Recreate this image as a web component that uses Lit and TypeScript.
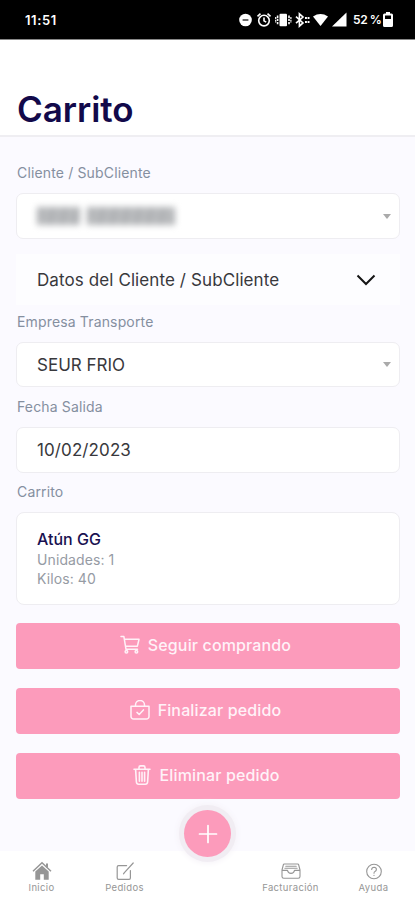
import { LitElement, html, css, svg } from "lit";
import { customElement } from "lit/decorators.js";

const stroke = (size: number, body: unknown, width = 1.2) => html`<svg
  width=${size} height=${size} viewBox="0 0 20 20" fill="none" stroke="currentColor"
  stroke-width=${width} stroke-linecap="round" stroke-linejoin="round">${body}</svg>`;

const cart = stroke(20, svg`<path d="M1 1.600h2.900L6 14.300h11.500M4.500 4.300H19l-1.600 6.900H5.500"/><circle cx="6.400" cy="16.800" r="1.300"/><circle cx="16.400" cy="16.800" r="1.300"/>`, 1.5);
const bag = stroke(20, svg`<path d="M1 6.200h18v10.200a2.600 2.600 0 0 1-2.600 2.600H3.600A2.600 2.600 0 0 1 1 16.400zM5.500 6V5a4.500 4.500 0 0 1 9 0v1M7 12.400l2.200 2.100 4.200-4.600"/>`, 1.5);
const trash = stroke(20, svg`<path d="M2 4.200h16M7 4V2.400Q7 .9 8.500 .9h3Q13 .9 13 2.400V4M3.600 4.400l.8 12.600q.2 2.200 2.200 2.200h6.800q2 0 2.200-2.200l.8-12.600M7.400 7.200v9M10 7.200v9M12.600 7.200v9"/>`, 1.6);

const home = html`<svg width="20" height="20" viewBox="0 0 20 20" fill="none" stroke="currentColor">
  <path d="M1 10.200 10 1.800l9 8.400" stroke-width="1.500"/><path d="M15 2.500v4" stroke-width="2"/>
  <path d="M10 4.400 3.300 10.500v8.300h4.900v-5.500h3.600v5.500h4.900v-8.300z" fill="currentColor" stroke="none"/></svg>`;
const edit = stroke(20, svg`<path d="M11.600 4.600H3.600q-1.400 0-1.400 1.400v11q0 1.300 1.400 1.300h10.500q1.300 0 1.300-1.300V9.500M18.200 2 9.400 11.600l-.9 1.200"/>`);
const tray = stroke(20, svg`<path d="M3.400 3h13.200q1 0 1.100 1L19 9v6.600q0 1.700-1.700 1.700H2.700Q1 17.300 1 15.600V9l1.300-5q.1-1 1.100-1zM1.200 9.400h5.300q.6 3 3.500 3t3.500-3h5.300M4.800 5.200h10.400M3.900 7.300h12.200"/>`, 1.1);
const help = stroke(20, svg`<circle cx="10" cy="10.500" r="7.300"/><path d="M7.700 8.500q.1-2.200 2.400-2.200 2.300.1 2.300 2.100 0 1.300-1.400 2-1 .6-1 1.800M10 14.400v.1"/>`, 1.1);

const statusIcons = html`<svg class="icons" width="110" height="16" viewBox="0 0 110 16" fill="#fff">
  <circle cx="6.500" cy="8" r="6.300"/><path d="M3.600 7.200h5.800v1.600H3.600z" fill="#444"/>
  <g fill="none" stroke="#fff" stroke-width="1.600"><circle cx="25" cy="8.600" r="5.300"/>
    <path d="M25 5.500v3.300l2.200 1.400M18.500 4.300l3-2.700M31.500 4.300l-3-2.700"/></g>
  <rect x="40.500" y="1.800" width="7.500" height="12.400" rx="1"/>
  <path d="M38.600 3.500v9M50 3.500v9" stroke="#fff" stroke-width="1.600" stroke-dasharray="2.400 .8"/><path d="M36.700 5v6M51.900 5v6" stroke="#fff" stroke-width="1.200" stroke-dasharray="2 .8"/>
  <path d="m57 4.600 7 6.300-3.600 3.300V1.800L64 5l-7 6.200" fill="none" stroke="#fff" stroke-width="1.600"/>
  <path d="M66 6h4.500M66 10h4.500" stroke="#fff" stroke-width="1.900" stroke-dasharray="1.900 .7"/>
  <path d="M74 4.400q7.500-4.800 15 0L81.500 14z"/><path d="M93 14.600h14.500V.6z"/></svg>`;

@customElement("app-root")
export class AppRoot extends LitElement {
  static styles = css`
    :host {
      display: flex; flex-direction: column; width: 415px; height: 900px;
      background: #fbfaff; font-family: Inter, "Liberation Sans", sans-serif; overflow: hidden;
    }
    * { box-sizing: border-box; }
    svg { display: block; flex: none; }
    .status {
      flex: none; height: 39px; background: #000; color: #fff; display: flex; align-items: center;
      padding: 0 22px 0 25px; font-size: 13px; font-weight: 600;
    }
    .time { flex: 1; letter-spacing: 0.6px; }
    .icons { margin-right: 4px; }
    .pct {
      width: 30px; font-size: 12px; font-weight: 600; letter-spacing: -0.3px; word-spacing: -0.5px; white-space: nowrap;
    }
    .head {
      flex: none; height: 98px; background: #fff; border-bottom: 2px solid #efeef2;
      border-top: 1px solid #888; padding: 49px 17px 0;
    }
    h1 { margin: 0; font-size: 35px; line-height: 40px; font-weight: 600; color: #12094a; letter-spacing: -0.05px; }
    .body { flex: 1; display: flex; flex-direction: column; padding: 26px 15px 0 16px; }
    .label { height: 20px; line-height: 20px; margin-left: 1px; font-size: 14px; color: #858f9f; letter-spacing: 0.15px; }
    .field {
      flex: none; display: flex; align-items: center; justify-content: space-between; height: 46px;
      margin-top: 10px; border: 1px solid #eeedf1; border-radius: 7px; background: #fff;
      padding: 0 8px 0 20px; font-size: 17px; color: #38383c;
    }
    .short { height: 45px; }
    .date { letter-spacing: 0.1px; }
    .caret { border: 4px solid transparent; border-top: 5px solid #aaa; border-bottom: 0; }
    .hidden { display: flex; gap: 7px; filter: blur(3px); }
    .hidden i { height: 18px; background: repeating-linear-gradient(100deg, #b0b2b5 0 6px, #bdbfc1 9px 12px); }
    .w1 { width: 43px; }
    .w2 { width: 88px; }
    .datos {
      flex: none; display: flex; align-items: center; justify-content: space-between; height: 51px;
      margin: 15px 0 7px; padding: 0 24px 0 21px; background: #fdfdff; color: #38383c;
      font-size: 17px; letter-spacing: 0.1px;
    }
    .gap { margin-top: 10px; }
    .cartLabel { margin-top: 9px; }
    .card {
      flex: none; height: 93px; margin-top: 10px; border: 1px solid #eeedf1; border-radius: 8px;
      background: #fff; padding: 15px 20px; font-size: 14px; line-height: 19px; color: #969ba4; letter-spacing: 0.1px;
    }
    .name { font-size: 16px; line-height: 22px; color: #191151; font-weight: 500; letter-spacing: 0; }
    .buttons { display: flex; flex-direction: column; gap: 19px; margin-top: 18px; }
    .btn {
      height: 46px; border-radius: 4px; background: #fc9bbb; color: #fff2f8; display: flex;
      align-items: center; justify-content: center; gap: 8px; font-size: 16px; font-weight: 500;
      letter-spacing: 0.14px; padding: 0 5px 2px 0;
    }
    .nav {
      flex: none; position: relative; height: 49px; background: #fff; display: grid;
      grid-template-columns: repeat(5, 83px);
    }
    .tab {
      display: flex; flex-direction: column; align-items: center; padding-top: 10px;
      color: #969696; font-size: 9.500px; line-height: 13px; letter-spacing: 0.35px;
    }
    .fab {
      position: absolute; left: 184px; top: -41px; width: 47px; height: 47px; border-radius: 50%;
      background: #fc9bbb; box-shadow: 0 0 0 5px #f1edf3, 0 0 6px 6px #f5f2f7;
      display: flex; align-items: center; justify-content: center; color: #fff;
    }
  `;

  render() {
    return html`
      <div class="status">
        <span class="time">11:51</span>${statusIcons}<span class="pct">52 %</span>
        <svg width="10" height="15" viewBox="0 0 10 15">
          <path fill="#fff" fill-rule="evenodd" d="M3 0h4v1.500h1.500q1.500 0 1.500 1.500v10.500q0 1.500-1.500 1.500h-7Q0 15 0 13.500V3q0-1.500 1.500-1.500H3zM2 3.500V7h6V3.500z"/>
        </svg>
      </div>
      <div class="head"><h1>Carrito</h1></div>
      <div class="body">
        <div class="label">Cliente / SubCliente</div>
        <div class="field"><span class="hidden"><i class="w1"></i><i class="w2"></i></span><span class="caret"></span></div>
        <div class="datos"><span>Datos del Cliente / SubCliente</span>
          <svg width="20" height="12" viewBox="0 0 20 12" fill="none" stroke="#151515" stroke-width="2"><path d="m1.500 1.500 8.500 8.500 8.500-8.500"/></svg>
        </div>
        <div class="label">Empresa Transporte</div>
        <div class="field short"><span>SEUR FRIO</span><span class="caret"></span></div>
        <div class="label gap">Fecha Salida</div>
        <div class="field date"><span>10/02/2023</span></div>
        <div class="label cartLabel">Carrito</div>
        <div class="card"><div class="name">Atún GG</div><div>Unidades: 1</div><div>Kilos: 40</div></div>
        <div class="buttons">
          <div class="btn">${cart}<span>Seguir comprando</span></div>
          <div class="btn">${bag}<span>Finalizar pedido</span></div>
          <div class="btn">${trash}<span>Eliminar pedido</span></div>
        </div>
      </div>
      <div class="nav">
        <div class="tab">${home}<span>Inicio</span></div>
        <div class="tab">${edit}<span>Pedidos</span></div>
        <div></div>
        <div class="tab">${tray}<span>Facturación</span></div>
        <div class="tab">${help}<span>Ayuda</span></div>
        <div class="fab">${stroke(20, svg`<path d="M10 1.500v17M1.500 10h17"/>`, 1.7)}</div>
      </div>`;
  }
}
